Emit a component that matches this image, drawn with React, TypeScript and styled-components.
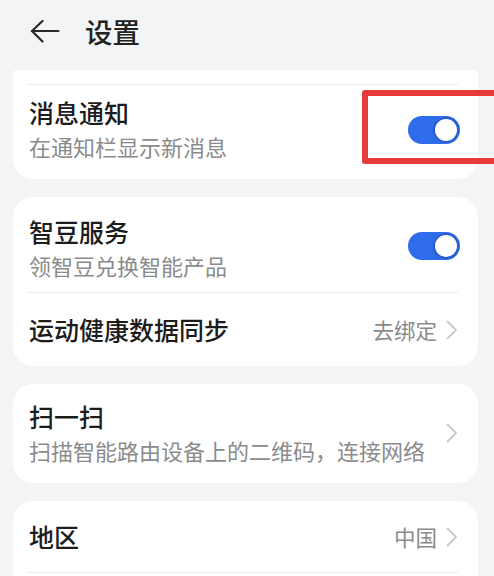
import React from 'react';
import styled, { createGlobalStyle } from 'styled-components';

const GlobalStyle = createGlobalStyle`
  html, body {
    margin: 0;
    padding: 0;
    background: #f3f4f6;
    overflow-x: hidden;
  }
  body {
    font-family: "Noto Sans CJK SC", "Noto Sans", sans-serif;
    color: #1c1c1c;
  }
`;

const Page = styled.div`
  width: 494px;
  display: flex;
  flex-direction: column;
`;

const Header = styled.header`
  height: 70px;
  box-sizing: border-box;
  padding: 0 0 6px 30px;
  display: flex;
  align-items: center;
`;

const BackButton = styled.button`
  border: 0;
  background: none;
  padding: 0;
  display: flex;
  cursor: pointer;
`;

const PageTitle = styled.h1`
  margin: 0 0 0 25px;
  font-size: 27.5px;
  font-weight: 500;
  line-height: 1;
  color: #222;
`;

const List = styled.div`
  display: flex;
  flex-direction: column;
  gap: 18px;
  padding: 0 16px 0 13px;
`;

const Card = styled.section<{ $cut?: boolean }>`
  background: #fff;
  border-radius: ${p => (p.$cut ? '4px 4px 20px 20px' : '20px')};
`;

const CutTop = styled.div`
  height: 14px;
`;

const Divider = styled.div`
  height: 1px;
  background: #ececec;
  margin: 0 20px 0 15px;
`;

const Row = styled.div<{ $h: number; $pt?: number; $pb?: number }>`
  height: ${p => p.$h}px;
  box-sizing: border-box;
  padding: ${p => p.$pt || 0}px 18px ${p => p.$pb || 0}px 16px;
  display: flex;
  align-items: center;
  justify-content: space-between;
`;

const Texts = styled.div<{ $pt?: number; $pb?: number }>`
  display: flex;
  flex-direction: column;
  padding: ${p => p.$pt || 0}px 0 ${p => p.$pb || 0}px;
`;

const Title = styled.div`
  font-size: 25px;
  font-weight: 500;
  line-height: 33px;
  color: #1c1c1c;
`;

const Sub = styled.div`
  font-size: 22px;
  line-height: 30px;
  margin-top: 2px;
  color: #8b8b8b;
`;

const Trailing = styled.div`
  display: flex;
  align-items: center;
  gap: 9px;
  padding-right: 2px;
`;

const Value = styled.span`
  font-size: 21.5px;
  color: #8a8a8a;
  line-height: 30px;
`;

const ToggleWrap = styled.div`
  position: relative;
  display: flex;
`;

const Track = styled.div<{ $on: boolean }>`
  width: 52px;
  height: 28px;
  border-radius: 14px;
  background: ${p => (p.$on ? '#2f6ceb' : '#d5d7db')};
  position: relative;
`;

const Knob = styled.div<{ $on: boolean }>`
  position: absolute;
  top: 1px;
  ${p => (p.$on ? 'right: 1px;' : 'left: 1px;')}
  width: 26px;
  height: 26px;
  box-sizing: border-box;
  border-radius: 50%;
  background: #fff;
  border: 2px solid #2a5ccc;
`;

const Highlight = styled.div`
  position: absolute;
  left: -46px;
  top: -26px;
  width: 150px;
  height: 74px;
  box-sizing: border-box;
  border: 6.5px solid #e73b3b;
  border-radius: 3px;
  pointer-events: none;
`;

const Chevron = () => (
  <svg width="12" height="20" viewBox="0 0 12 20" fill="none">
    <polyline points="1.5,1.5 10,10 1.5,18.5" stroke="#c9c9c9" strokeWidth="1.8" strokeLinecap="round" strokeLinejoin="round" />
  </svg>
);

const BackArrow = () => (
  <svg width="30" height="24" viewBox="0 0 30 24" fill="none">
    <line x1="2" y1="11" x2="28.5" y2="11" stroke="#2b2b2b" strokeWidth="2.2" strokeLinecap="round" />
    <polyline points="12.5,1 2,11 12.5,21.5" stroke="#2b2b2b" strokeWidth="2.2" strokeLinecap="round" strokeLinejoin="round" />
  </svg>
);

const Toggle = ({ on, marked }: { on: boolean; marked?: boolean }) => (
  <ToggleWrap>
    <Track $on={on}>
      <Knob $on={on} />
    </Track>
    {marked && <Highlight />}
  </ToggleWrap>
);

const App = () => {
  return (
    <>
      <GlobalStyle />
      <Page>
        <Header>
          <BackButton aria-label="返回">
            <BackArrow />
          </BackButton>
          <PageTitle>设置</PageTitle>
        </Header>
        <List>
          <Card $cut>
            <CutTop />
            <Divider />
            <Row $h={94} $pb={4}>
              <Texts $pb={4}>
                <Title>消息通知</Title>
                <Sub>在通知栏显示新消息</Sub>
              </Texts>
              <Toggle on marked />
            </Row>
          </Card>

          <Card>
            <Row $h={95} $pt={2}>
              <Texts $pt={4}>
                <Title>智豆服务</Title>
                <Sub>领智豆兑换智能产品</Sub>
              </Texts>
              <Toggle on />
            </Row>
            <Divider />
            <Row $h={73}>
              <Title>运动健康数据同步</Title>
              <Trailing>
                <Value>去绑定</Value>
                <Chevron />
              </Trailing>
            </Row>
          </Card>

          <Card>
            <Row $h={99} $pb={2}>
              <Texts>
                <Title>扫一扫</Title>
                <Sub>扫描智能路由设备上的二维码，连接网络</Sub>
              </Texts>
              <Trailing>
                <Chevron />
              </Trailing>
            </Row>
          </Card>

          <Card>
            <Row $h={71}>
              <Title>地区</Title>
              <Trailing>
                <Value>中国</Value>
                <Chevron />
              </Trailing>
            </Row>
            <Divider />
            <Row $h={72} />
          </Card>
        </List>
      </Page>
    </>
  );
};

export default App;
